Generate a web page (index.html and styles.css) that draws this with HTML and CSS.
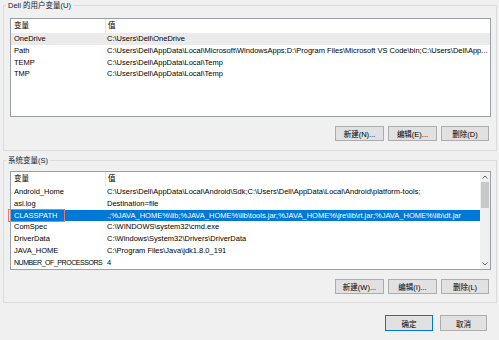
FILE: index.html
```html
<!DOCTYPE html>
<html>
<head>
    <title>环境变量</title>
    <meta charset="utf-8">
    <link rel="stylesheet" href="styles.css">
</head>
<body>

<div class="dialog">

    <fieldset class="group group-user">
        <legend>Dell 的用户变量(U)</legend>
        <div class="list">
            <div class="rows">
                <div class="row head"><span class="c1">变量</span><span class="c2">值</span></div>
                <div class="row soft"><span class="c1">OneDrive</span><span class="c2">C:\Users\Dell\OneDrive</span></div>
                <div class="row"><span class="c1">Path</span><span class="c2">C:\Users\Dell\AppData\Local\Microsoft\WindowsApps;D:\Program Files\Microsoft VS Code\bin;C:\Users\Dell\App...</span></div>
                <div class="row"><span class="c1">TEMP</span><span class="c2">C:\Users\Dell\AppData\Local\Temp</span></div>
                <div class="row"><span class="c1">TMP</span><span class="c2">C:\Users\Dell\AppData\Local\Temp</span></div>
            </div>
        </div>
        <div class="btns">
            <button class="btn">新建(N)...</button>
            <button class="btn">编辑(E)...</button>
            <button class="btn btn-del">删除(D)</button>
        </div>
    </fieldset>

    <fieldset class="group group-sys">
        <legend>系统变量(S)</legend>
        <div class="list">
            <div class="rows">
                <div class="row head"><span class="c1">变量</span><span class="c2">值</span></div>
                <div class="row"><span class="c1">Android_Home</span><span class="c2">C:\Users\Dell\AppData\Local\Android\Sdk;C:\Users\Dell\AppData\Local\Android\platform-tools;</span></div>
                <div class="row"><span class="c1">asl.log</span><span class="c2">Destination=file</span></div>
                <div class="row selected"><span class="c1 marked">CLASSPATH</span><span class="c2">.;%JAVA_HOME%\lib;%JAVA_HOME%\lib\tools.jar;%JAVA_HOME%\jre\lib\rt.jar;%JAVA_HOME%\lib\dt.jar</span></div>
                <div class="row"><span class="c1">ComSpec</span><span class="c2">C:\WINDOWS\system32\cmd.exe</span></div>
                <div class="row"><span class="c1">DriverData</span><span class="c2">C:\Windows\System32\Drivers\DriverData</span></div>
                <div class="row"><span class="c1">JAVA_HOME</span><span class="c2">C:\Program Files\Java\jdk1.8.0_191</span></div>
                <div class="row"><span class="c1 tight">NUMBER_OF_PROCESSORS</span><span class="c2">4</span></div>
            </div>
            <div class="scrollbar">
                <div class="arrow">
                    <svg width="6" height="4" viewBox="0 0 6 4"><path d="M0.5 3.5 L3 1 L5.5 3.5" fill="none" stroke="#606060" stroke-width="1"/></svg>
                </div>
                <div class="track"><div class="thumb"></div></div>
                <div class="arrow">
                    <svg width="6" height="4" viewBox="0 0 6 4"><path d="M0.5 0.5 L3 3 L5.5 0.5" fill="none" stroke="#606060" stroke-width="1"/></svg>
                </div>
            </div>
        </div>
        <div class="btns">
            <button class="btn">新建(W)...</button>
            <button class="btn">编辑(I)...</button>
            <button class="btn btn-del">删除(L)</button>
        </div>
    </fieldset>

    <div class="footer">
        <button class="btn btn-ok">确定</button>
        <button class="btn btn-cancel">取消</button>
    </div>

</div>

</body>
</html>
```

FILE: styles.css
```css
body {
    margin: 0;
    padding: 0;
    background: #f0f0f0;
    font-family: "Liberation Sans", "Noto Sans CJK SC", sans-serif;
    font-size: 7.5px;
    color: #000;
}

.dialog {
    width: 499px;
    height: 340px;
    overflow: hidden;
}

.group {
    margin: 0 2px 0 3px;
    border: 1px solid #dcdcdc;
    padding: 7px 5px 9px 6px;
    min-width: 0;
}

.group legend {
    margin-left: -4px;
    padding: 0 2px;
    line-height: 11px;
    height: 11px;
    color: #1a1a1a;
}

.group-sys {
    margin-top: 4px;
    padding-top: 5px;
    padding-bottom: 8px;
}

.list {
    height: 99px;
    box-sizing: border-box;
    border: 1px solid #9a9ea6;
    background: white;
    display: flex;
}

.rows {
    flex: 1;
    min-width: 0;
}

.row {
    display: flex;
    height: 11.8px;
    line-height: 11.8px;
    white-space: nowrap;
}

.row.head {
    height: 14px;
    line-height: 14px;
}

.c1 {
    width: 94px;
    flex: none;
    box-sizing: border-box;
    padding-left: 3px;
    overflow: hidden;
}

.c1.tight {
    font-size: 7px;
    letter-spacing: -0.45px;
}

.c2 {
    flex: 1;
    min-width: 0;
    padding-left: 2px;
    padding-right: 6px;
    overflow: hidden;
}

.row.head .c2 {
    border-left: 1px solid #e5e5e5;
}

.row.soft {
    background: #ebebeb;
}

.row.selected {
    background: #0078d7;
    color: white;
}

.marked {
    position: relative;
    overflow: visible;
}

.marked::after {
    content: "";
    position: absolute;
    left: -3px;
    top: -1px;
    width: 55px;
    height: 11px;
    border: 1px solid #e27a72;
}

.scrollbar {
    width: 10px;
    flex: none;
    background: #f0f0f0;
    display: flex;
    flex-direction: column;
}

.arrow {
    height: 10px;
    display: flex;
    align-items: center;
    justify-content: center;
}

.track {
    flex: 1;
}

.thumb {
    margin: 0 1px;
    height: 26px;
    background: #c8c8c8;
}

.btns {
    display: flex;
    justify-content: flex-end;
    gap: 4px;
    margin-top: 9px;
    padding-right: 2px;
}

.btn {
    width: 49px;
    height: 15px;
    padding: 0;
    border: 1px solid #adadad;
    background: #e1e1e1;
    font-family: inherit;
    font-size: 7.5px;
    color: #000;
}

.btn-del {
    width: 48px;
}

.footer {
    display: flex;
    justify-content: flex-end;
    gap: 7px;
    margin-top: 12px;
    padding-right: 12px;
}

.footer .btn {
    height: 16px;
    width: 47px;
}

.footer .btn-ok {
    width: 48px;
    border-color: #0078d7;
}
```
